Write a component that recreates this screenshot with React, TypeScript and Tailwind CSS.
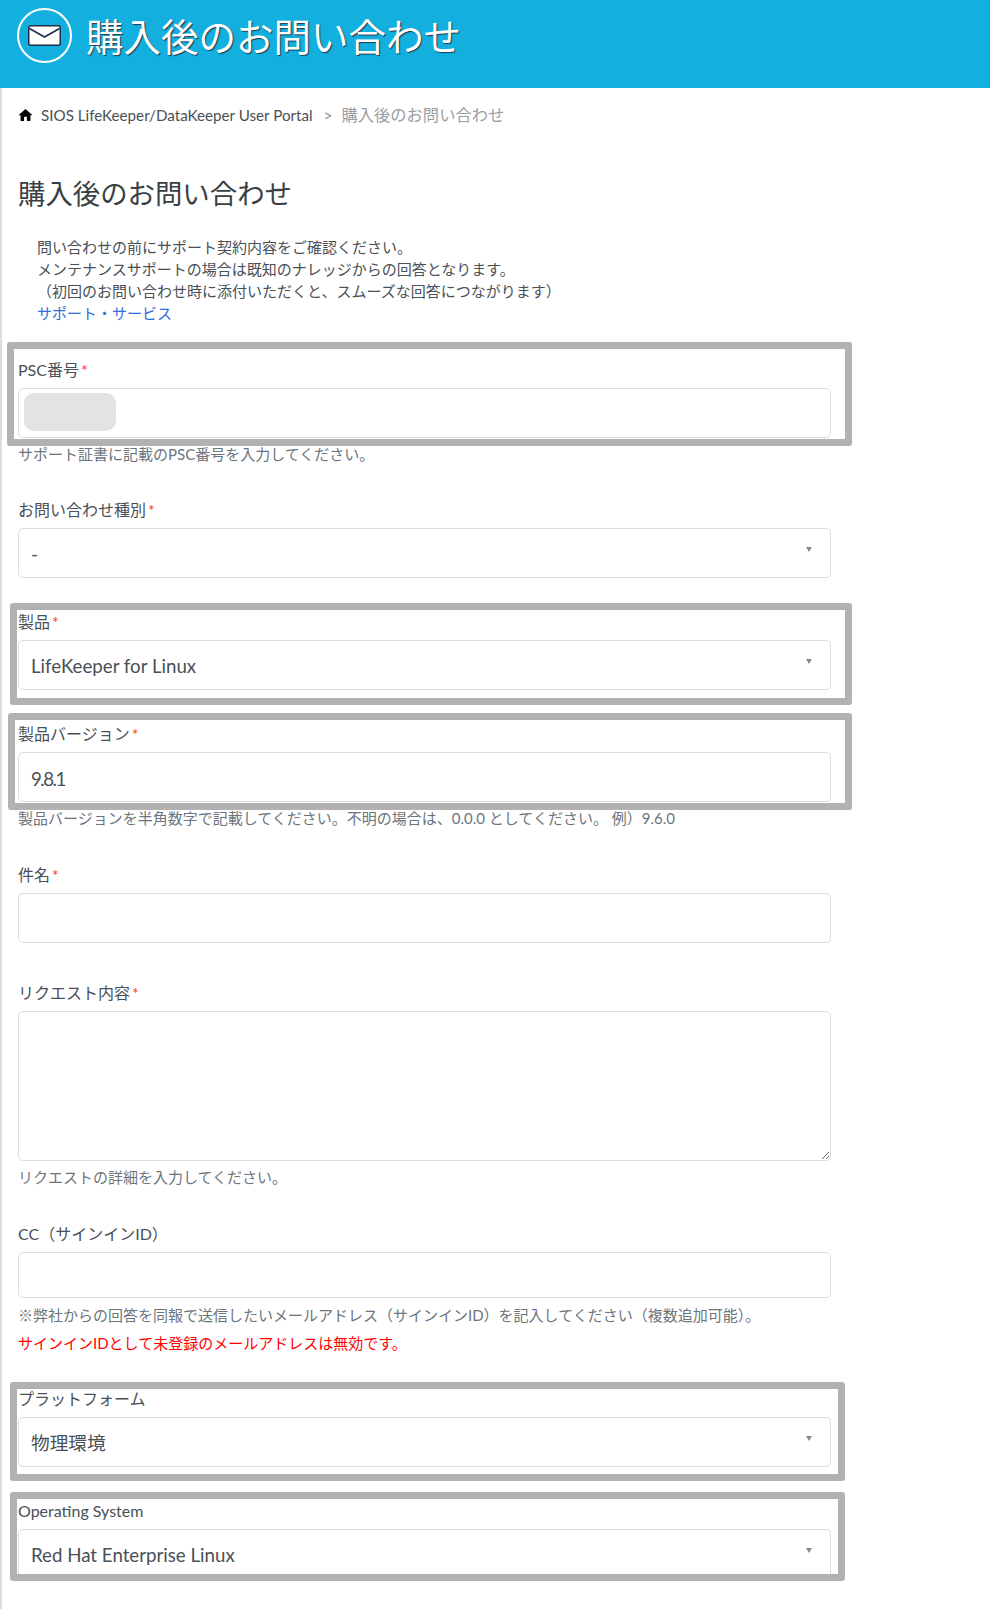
import type { ReactNode } from 'react';

const labelCls = 'block h-[22px] text-[16px] leading-[22px] text-[#495057] whitespace-nowrap';
const helpCls = 'h-[22px] text-[15px] leading-[22px] text-[#6c757d] whitespace-nowrap';
const controlCls =
  'block w-full rounded-[5px] border border-[#dddddd] bg-white px-[12px] pt-[3px] text-[18.7px] text-[#495057] outline-none';

function Label({ children, required }: { children: ReactNode; required?: boolean }) {
  return (
    <label className={labelCls}>
      {children}
      {required && <span className="ml-[2px] text-[#ff3333]">*</span>}
    </label>
  );
}

function SelectBox({ value }: { value: string }) {
  return (
    <div className="relative mt-[7px]">
      <div className={`${controlCls} flex h-[50px] items-center`}>{value}</div>
      <span className="absolute right-[19px] top-[19px] h-0 w-0 border-x-[3.5px] border-t-[5px] border-x-transparent border-t-[#8a8a8a]" />
    </div>
  );
}

function TextBox({ value, className = 'h-[50px]' }: { value?: string; className?: string }) {
  return <input readOnly value={value ?? ''} className={`${controlCls} mt-[7px] ${className}`} />;
}

// the grey marker rectangles drawn on top of the screenshot
function Marked({ className, children, box }: { className: string; children: ReactNode; box: string }) {
  return (
    <div className={`relative ${className}`}>
      {children}
      <div className={`pointer-events-none absolute rounded-[3px] border-[7px] border-[#b3b2b2] ${box}`} />
    </div>
  );
}

export default function App() {
  return (
    <div className="min-h-[1609px] w-[990px] border-l-2 border-[#dcdcdc] bg-white font-['Lato','Noto_Sans_CJK_JP',sans-serif]">
      <header className="-ml-[2px] flex h-[88px] items-start bg-[#12afdf] pl-[17px] pt-[8px]">
        <div className="flex h-[55px] w-[55px] items-center justify-center rounded-full border-2 border-white">
          <svg viewBox="0 0 33 21" className="h-[21px] w-[33px]" aria-hidden>
            <rect x="0.75" y="0.75" width="31.5" height="19.5" rx="2" fill="#fff" stroke="#1b2f4a" strokeWidth="1.5" />
            <path d="M1.5 3.5 16.5 12 31.5 3.5" fill="none" stroke="#1b2f4a" strokeWidth="1.6" />
          </svg>
        </div>
        <h2 className="ml-[14px] mt-[6px] text-[37.5px] leading-[46px] text-white whitespace-nowrap [text-shadow:1px_1px_1px_#22384d]">
          購入後のお問い合わせ
        </h2>
      </header>

      <main className="pl-[16px]">
        <nav className="mt-[16px] flex h-[22px] items-center whitespace-nowrap">
          <svg viewBox="2 3 20 17" className="h-[12px] w-[15px] text-black" fill="currentColor" aria-hidden>
            <path d="M10 20v-6h4v6h5v-8h3L12 3 2 12h3v8z" />
          </svg>
          <span className="ml-[8px] text-[15.2px] text-[#495057]">SIOS LifeKeeper/DataKeeper User Portal</span>
          <span className="ml-[11px] text-[15.2px] text-[#8a8f94]">&gt;</span>
          <span className="ml-[9px] text-[16.3px] text-[#9a9ea3]">購入後のお問い合わせ</span>
        </nav>

        <h1 className="mt-[48px] text-[27.4px] leading-[40px] text-[#3a3f44] whitespace-nowrap">購入後のお問い合わせ</h1>

        <div className="mt-[22px] pl-[19px] text-[15px] leading-[22px] text-[#495057] whitespace-nowrap">
          <p>問い合わせの前にサポート契約内容をご確認ください。</p>
          <p>メンテナンスサポートの場合は既知のナレッジからの回答となります。</p>
          <p>（初回のお問い合わせ時に添付いただくと、スムーズな回答につながります）</p>
          <a className="text-[#2f6fdc]">サポート・サービス</a>
        </div>

        <div className="w-[813px]">
          <Marked className="mt-[35px]" box="-left-[11px] -right-[21px] -top-[17px] -bottom-[8px]">
            <Label required>PSC番号</Label>
            <div className="relative">
              <TextBox />
              <div className="absolute left-[6px] top-[5px] h-[38px] w-[92px] rounded-[10px] bg-[#e3e3e3]" />
            </div>
          </Marked>
          <p className={`mt-[5px] ${helpCls}`}>サポート証書に記載のPSC番号を入力してください。</p>

          <div className="mt-[34px]">
            <Label required>お問い合わせ種別</Label>
            <SelectBox value="-" />
          </div>

          <Marked className="mt-[33px]" box="-left-[8px] -right-[21px] -top-[8px] -bottom-[15px]">
            <Label required>製品</Label>
            <SelectBox value="LifeKeeper for Linux" />
          </Marked>

          <Marked className="mt-[33px]" box="-left-[10px] -right-[21px] -top-[10px] -bottom-[8px]">
            <Label required>製品バージョン</Label>
            <TextBox value="9.8.1" className="h-[50px] tracking-[-1.5px]" />
          </Marked>
          <p className={`mt-[5px] ${helpCls}`}>製品バージョンを半角数字で記載してください。不明の場合は、0.0.0 としてください。 例）9.6.0</p>

          <div className="mt-[35px]">
            <Label required>件名</Label>
            <TextBox />
          </div>

          <div className="mt-[39px]">
            <Label required>リクエスト内容</Label>
            <textarea readOnly className={`${controlCls} mt-[7px] h-[150px]`} />
          </div>
          <p className={`mt-[5px] ${helpCls}`}>リクエストの詳細を入力してください。</p>

          <div className="mt-[35px]">
            <Label>CC（サインインID）</Label>
            <TextBox className="h-[46px]" />
          </div>
          <p className={`mt-[6px] ${helpCls}`}>※弊社からの回答を同報で送信したいメールアドレス（サインインID）を記入してください（複数追加可能）。</p>
          <p className={`mt-[6px] ${helpCls} !text-[#ff0000]`}>サインインIDとして未登録のメールアドレスは無効です。</p>

          <Marked className="mt-[34px]" box="-left-[8px] -right-[14px] -top-[6px] -bottom-[14px]">
            <Label>プラットフォーム</Label>
            <SelectBox value="物理環境" />
          </Marked>

          <Marked className="mt-[33px]" box="-left-[8px] -right-[14px] -top-[8px] -bottom-[2px]">
            <Label>Operating System</Label>
            <SelectBox value="Red Hat Enterprise Linux" />
          </Marked>
        </div>
      </main>
    </div>
  );
}
